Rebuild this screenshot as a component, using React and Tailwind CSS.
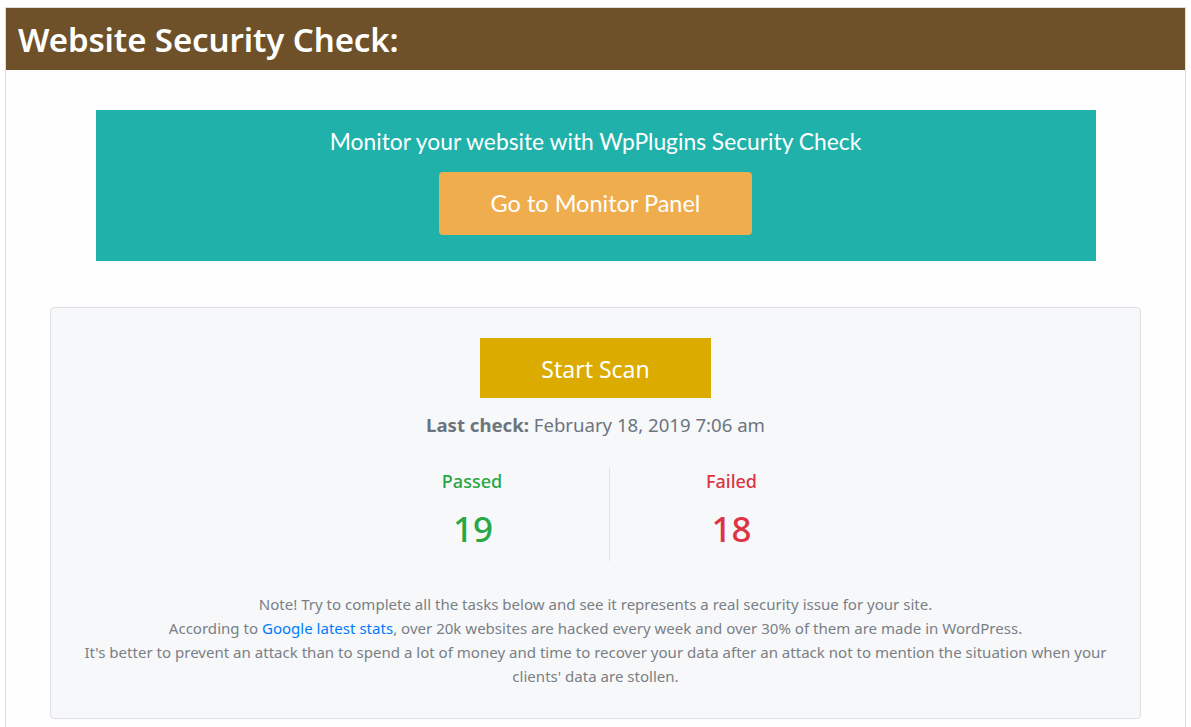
export default function App() {
  return (
    <div className="min-h-[727px] bg-white pt-[7px] pl-[5px] pr-[5px]">
      <div className="w-[1181px] border border-[#dddddd] bg-[#fefefe]">
        <div className="h-[62px] bg-[#6f5129] flex items-center pl-[12px]">
          <h1 className="text-white text-[33px] font-semibold leading-none font-['Noto_Sans',sans-serif] tracking-[-0.1px]">
            Website Security Check:
          </h1>
        </div>
        <div className="pt-[40px] pb-[20px]">
          <div className="mx-auto w-[1000px] h-[151px] bg-[#20b2aa] flex flex-col items-center pt-[17px] font-['Lato',sans-serif]">
            <div className="text-white text-[22.8px] leading-[28px]">
              Monitor your website with WpPlugins Security Check
            </div>
            <div className="mt-[17px] w-[313px] h-[63px] rounded-[4px] bg-[#f0ad4e] flex items-center justify-center text-white text-[23.5px]">
              Go to Monitor Panel
            </div>
          </div>
          <div className="mx-[44px] mt-[46px] rounded-[4px] border border-[#dddfe2] bg-[#f7f8fa] pt-[30px] pb-[30px] px-[20px] font-['Noto_Sans',sans-serif] flex flex-col items-center">
            <div className="w-[231px] h-[60px] bg-[#dcab00] flex items-center justify-center text-white text-[23px] pt-[3px]">
              Start Scan
            </div>
            <div className="mt-[13px] text-[18.6px] leading-[27px] text-[#6c757d]">
              <span className="font-bold">Last check:</span> February 18, 2019 7:06 am
            </div>
            <div className="mt-[30px] flex">
              <div className="w-[272px] border-r border-[#dee2e6] h-[93px] flex flex-col items-center">
                <div className="text-[18px] leading-[27px] text-[#28a745] font-medium -ml-[2px]">Passed</div>
                <div className="mt-[10px] text-[35px] leading-[48px] text-[#28a745] font-medium">19</div>
              </div>
              <div className="w-[244px] h-[93px] flex flex-col items-center">
                <div className="text-[18px] leading-[27px] text-[#dc3545] font-medium">Failed</div>
                <div className="mt-[10px] text-[35px] leading-[48px] text-[#dc3545] font-medium">18</div>
              </div>
            </div>
            <div className="mt-[31px] text-center text-[15.05px] leading-[24px] text-[#7a7f85]">
              Note! Try to complete all the tasks below and see it represents a real security issue for your site.
              <br />
              According to <span className="text-[#007bff]">Google latest stats</span>, over 20k websites are hacked every week and over 30% of them are made in WordPress.
              <br />
              It's better to prevent an attack than to spend a lot of money and time to recover your data after an attack not to mention the situation when your
              <br />
              clients' data are stollen.
            </div>
          </div>
        </div>
      </div>
    </div>
  );
}
